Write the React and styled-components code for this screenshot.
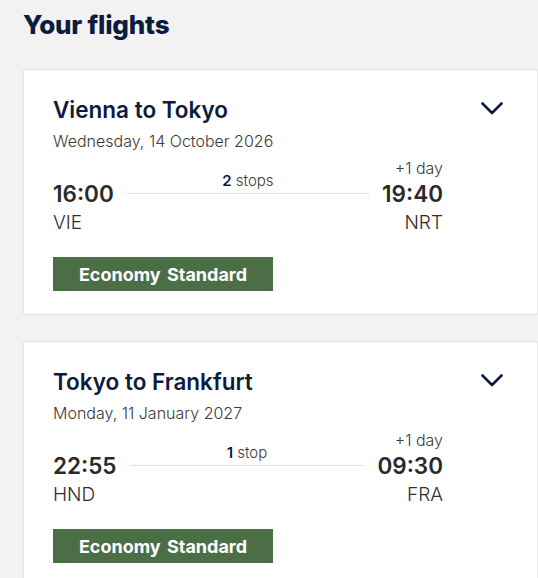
import React from "react";
import styled, { createGlobalStyle } from "styled-components";

const GlobalStyle = createGlobalStyle`
  html, body {
    margin: 0;
    padding: 0;
    background: #f2f2f2;
  }
  body {
    font-family: Inter, "Noto Sans", sans-serif;
    -webkit-font-smoothing: antialiased;
  }
`;

const flights = [
  {
    id: 1,
    title: "Vienna to Tokyo",
    date: "Wednesday, 14 October 2026",
    depart: "16:00",
    from: "VIE",
    arrive: "19:40",
    to: "NRT",
    stops: 2,
    dayShift: "+1 day",
    fare: "Economy Standard"
  },
  {
    id: 2,
    title: "Tokyo to Frankfurt",
    date: "Monday, 11 January 2027",
    depart: "22:55",
    from: "HND",
    arrive: "09:30",
    to: "FRA",
    stops: 1,
    dayShift: "+1 day",
    fare: "Economy Standard"
  }
];

const Page = styled.div`
  width: 538px;
  min-height: 578px;
  box-sizing: border-box;
  padding: 9px 0 0 23px;
  overflow: hidden;
`;

const Heading = styled.h1`
  margin: 0 0 28px;
  font-size: 26px;
  line-height: 32px;
  font-weight: 800;
  color: #0d1b3e;
  letter-spacing: -0.2px;
`;

const CardList = styled.div`
  display: flex;
  flex-direction: column;
  gap: 26px;
`;

const Card = styled.section`
  width: 515px;
  box-sizing: border-box;
  background: #fff;
  border: 1px solid #e4e4e4;
  padding: 26px 0 23px 29px;
  display: flex;
  align-items: flex-start;
`;

const Content = styled.div`
  width: 390px;
  display: flex;
  flex-direction: column;
`;

const Title = styled.h2`
  margin: 0;
  font-size: 22.5px;
  line-height: 28px;
  font-weight: 600;
  color: #0d1b3e;
`;

const DateText = styled.div`
  margin-top: 7px;
  font-size: 16px;
  line-height: 20px;
  font-weight: 300;
  color: #3a3a3a;
`;

const Timeline = styled.div`
  margin-top: 7px;
  display: grid;
  grid-template-columns: auto 1fr auto;
  grid-template-rows: 20px 32px 26px;
  column-gap: 13px;
`;

const DayShift = styled.div`
  grid-column: 3;
  grid-row: 1;
  justify-self: end;
  font-size: 16px;
  line-height: 20px;
  font-weight: 300;
  color: #3a3a3a;
`;

const Time = styled.div`
  grid-column: ${(p) => (p.$end ? 3 : 1)};
  grid-row: 2;
  justify-self: ${(p) => (p.$end ? "end" : "start")};
  font-size: 22.5px;
  line-height: 32px;
  font-weight: 600;
  color: #2a2a2a;
`;

const Airport = styled.div`
  grid-column: ${(p) => (p.$end ? 3 : 1)};
  grid-row: 3;
  justify-self: ${(p) => (p.$end ? "end" : "start")};
  font-size: 19px;
  line-height: 26px;
  font-weight: 300;
  color: #2e2e2e;
`;

const Route = styled.div`
  grid-column: 2;
  grid-row: 1 / 3;
  display: flex;
  flex-direction: column;
  justify-content: flex-end;
  align-items: center;
  padding-bottom: 16px;
`;

const Stops = styled.div`
  margin-bottom: 3px;
  font-size: 15px;
  line-height: 18px;
  font-weight: 300;
  color: #3a3a3a;

  b {
    font-weight: 600;
    color: #0d1b3e;
  }
`;

const Line = styled.div`
  width: 100%;
  height: 1px;
  background: #e0e0e0;
`;

const Fare = styled.div`
  margin-top: 21px;
  width: 220px;
  height: 34px;
  display: flex;
  align-items: center;
  justify-content: center;
  background: #4b6e46;
  color: #fff;
  font-size: 18px;
  font-weight: 700;
  word-spacing: 2px;
`;

const Toggle = styled.button`
  margin: 6px 0 0 38px;
  padding: 0;
  border: 0;
  background: none;
  display: flex;
  cursor: pointer;
`;

const Chevron = () => (
  <svg width="22" height="13" viewBox="0 0 22 13" fill="none">
    <path
      d="M1.5 1.5 L11 11 L20.5 1.5"
      stroke="#0d1b3e"
      strokeWidth="2.6"
      strokeLinecap="round"
      strokeLinejoin="round"
    />
  </svg>
);

const FlightCard = ({ flight }) => (
  <Card>
    <Content>
      <Title>{flight.title}</Title>
      <DateText>{flight.date}</DateText>
      <Timeline>
        <DayShift>{flight.dayShift}</DayShift>
        <Time>{flight.depart}</Time>
        <Route>
          <Stops>
            <b>{flight.stops}</b> {flight.stops === 1 ? "stop" : "stops"}
          </Stops>
          <Line />
        </Route>
        <Time $end>{flight.arrive}</Time>
        <Airport>{flight.from}</Airport>
        <Airport $end>{flight.to}</Airport>
      </Timeline>
      <Fare>{flight.fare}</Fare>
    </Content>
    <Toggle aria-label="Show details">
      <Chevron />
    </Toggle>
  </Card>
);

export default function App() {
  return (
    <Page>
      <GlobalStyle />
      <Heading>Your flights</Heading>
      <CardList>
        {flights.map((flight) => (
          <FlightCard key={flight.id} flight={flight} />
        ))}
      </CardList>
    </Page>
  );
}
